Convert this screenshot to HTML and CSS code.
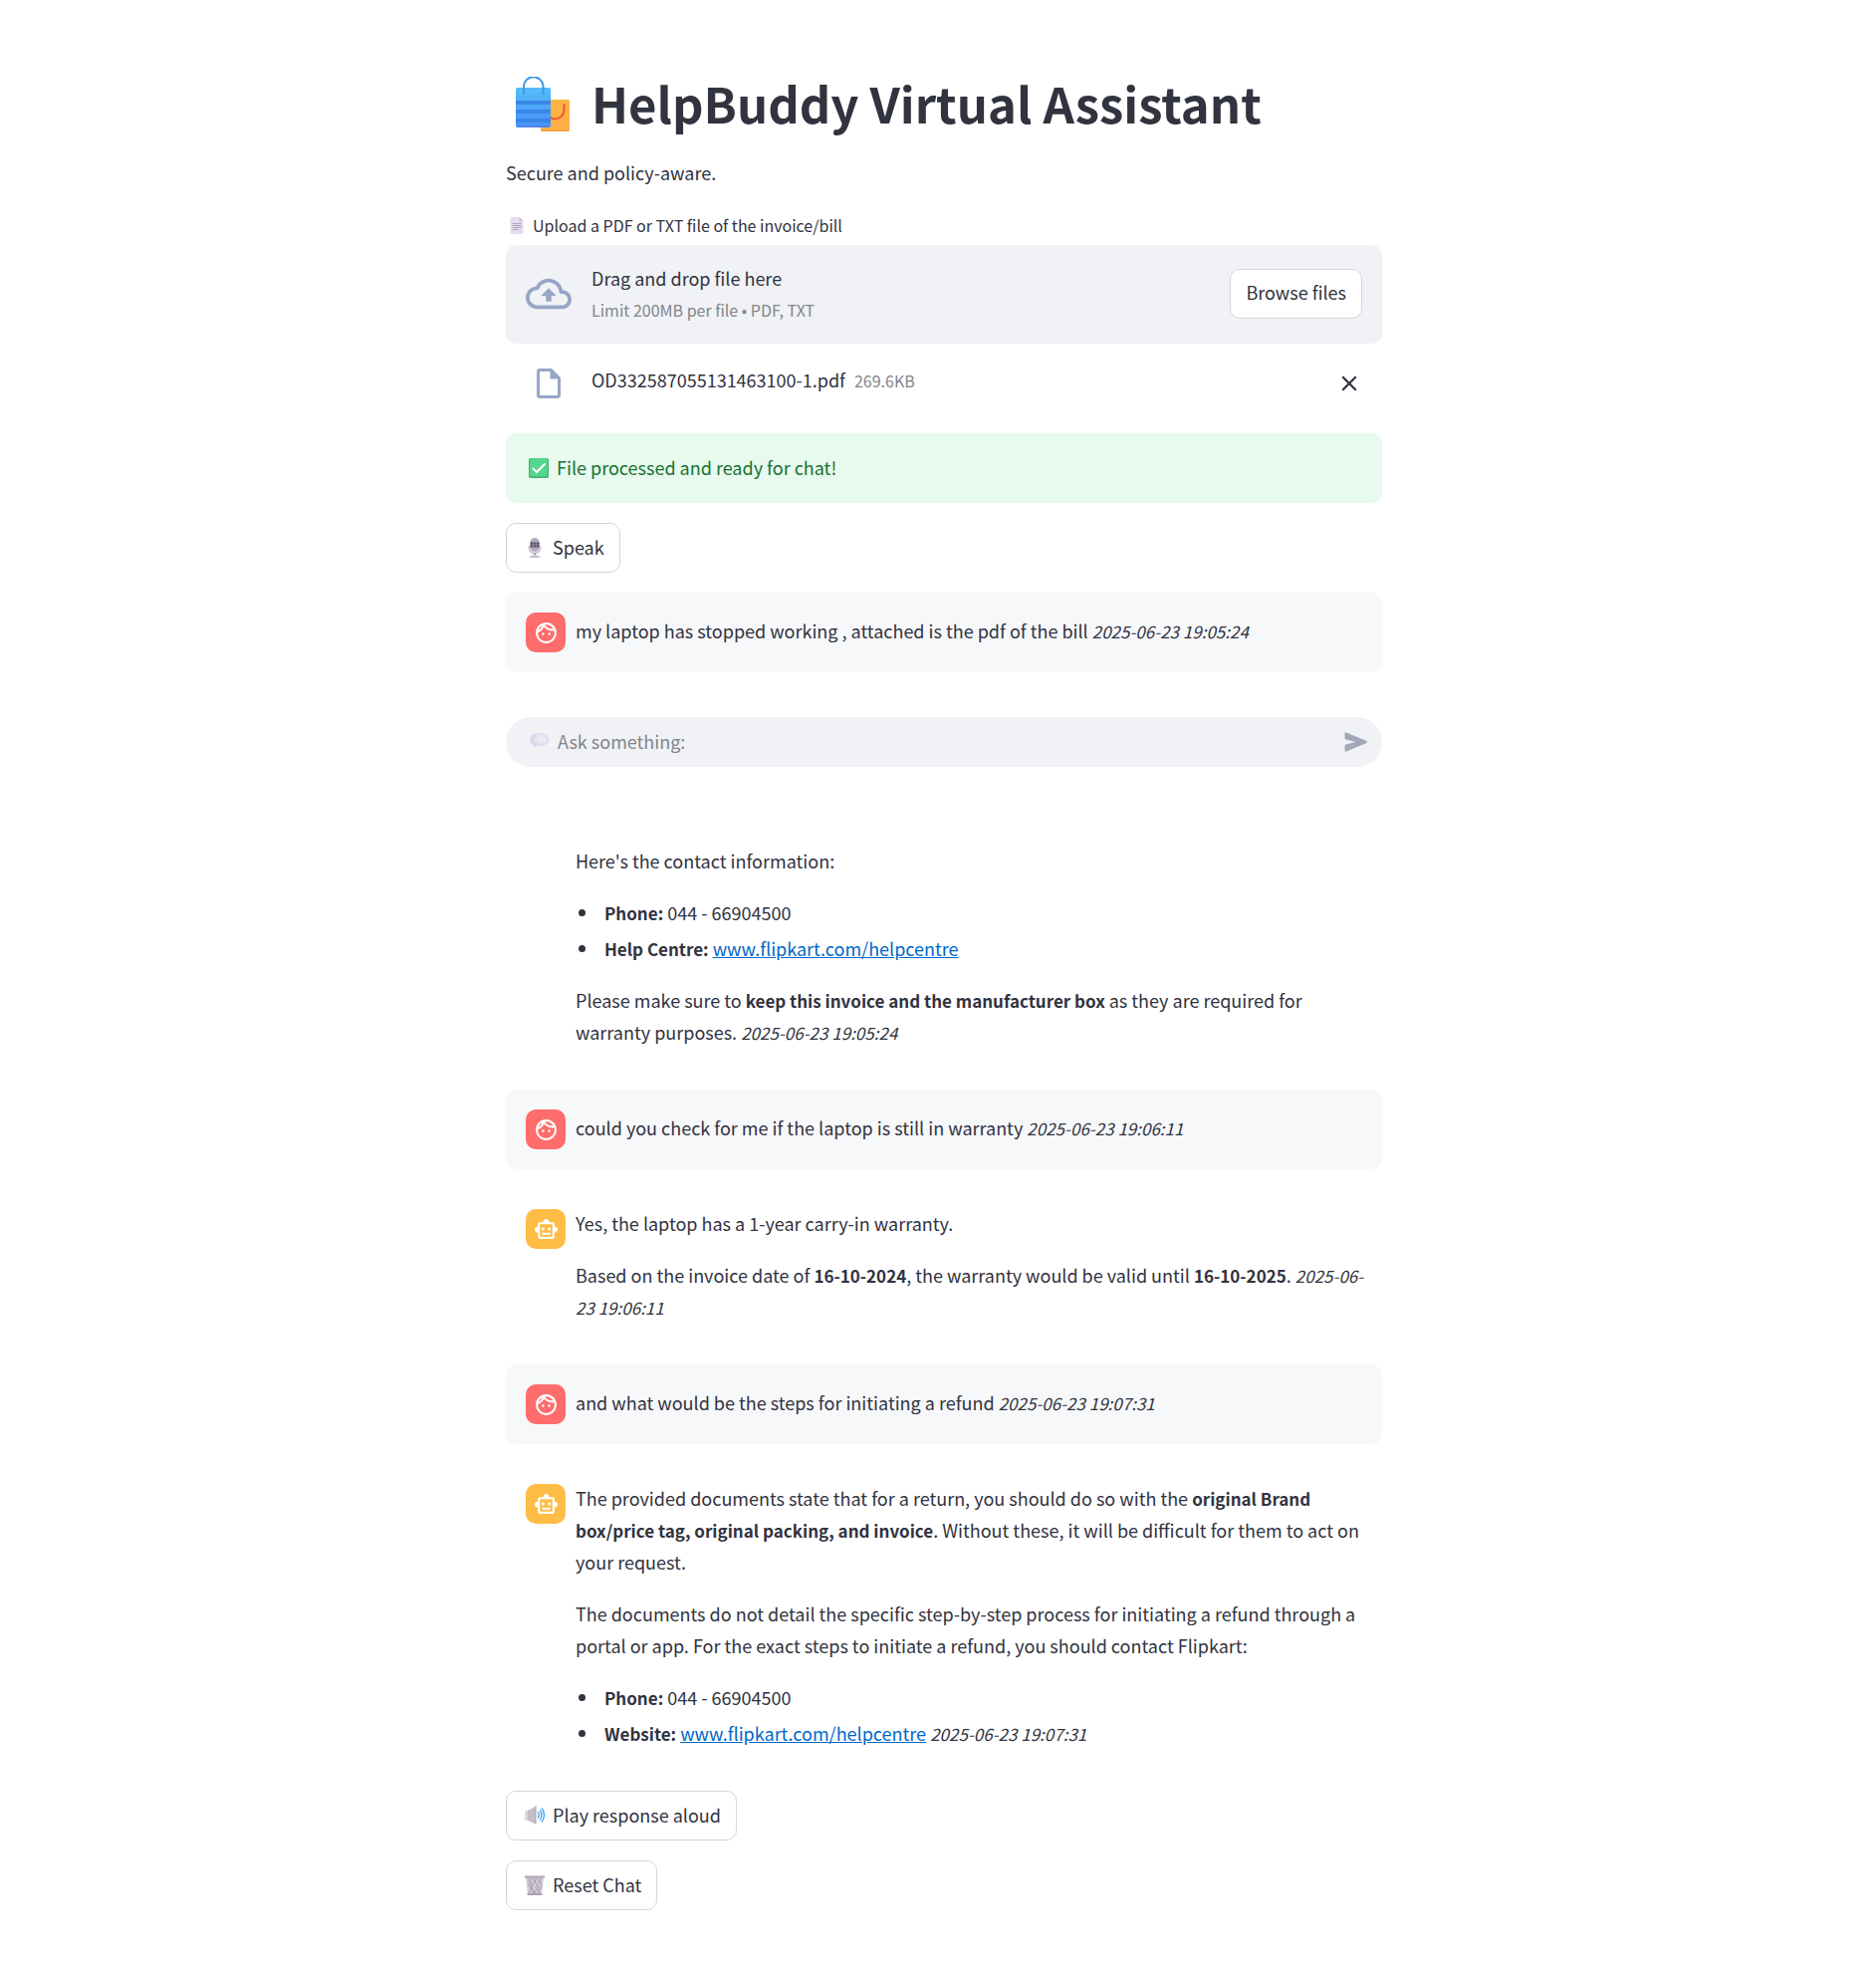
FILE: index.html
```html
<!DOCTYPE html>
<html lang="en">
<head>
<meta charset="utf-8">
<meta name="viewport" content="width=device-width, initial-scale=1">
<title>HelpBuddy Virtual Assistant</title>
<link rel="stylesheet" href="styles.css">
</head>
<body>
<svg class="sprite" aria-hidden="true">
  <symbol id="face" viewBox="0 0 24 24"><path d="M10.25 13c0 .69-.56 1.25-1.25 1.25S7.75 13.69 7.75 13s.56-1.25 1.25-1.25 1.25.56 1.25 1.25zM15 11.75c-.69 0-1.25.56-1.25 1.25s.56 1.25 1.25 1.25 1.25-.56 1.25-1.25-.56-1.25-1.25-1.25zm7 .25c0 5.52-4.48 10-10 10S2 17.52 2 12 6.48 2 12 2s10 4.48 10 10zM10.66 4.12C12.06 6.44 14.6 8 17.5 8c.46 0 .91-.05 1.34-.12C17.44 5.56 14.9 4 12 4c-.46 0-.91.05-1.34.12zM4.42 9.47c1.71-.97 3.03-2.55 3.66-4.44C6.37 6 5.05 7.58 4.42 9.47zM20 12c0-.78-.12-1.53-.33-2.24-.7.15-1.42.24-2.17.24-3.13 0-5.92-1.44-7.76-3.69C8.69 8.87 6.6 10.88 4 11.86c.01.04 0 .09 0 .14 0 4.41 3.59 8 8 8s8-3.59 8-8z"/></symbol>
  <symbol id="robot" viewBox="0 0 24 24"><path d="M20 9V7c0-1.1-.9-2-2-2h-3c0-1.66-1.34-3-3-3S9 3.34 9 5H6c-1.1 0-2 .9-2 2v2c-1.66 0-3 1.34-3 3s1.34 3 3 3v4c0 1.1.9 2 2 2h12c1.1 0 2-.9 2-2v-4c1.66 0 3-1.34 3-3s-1.34-3-3-3zm-2 10H6V7h12v12zm-9-6c-.83 0-1.5-.67-1.5-1.5S8.17 10 9 10s1.5.67 1.5 1.5S9.83 13 9 13zm7.5-1.5c0 .83-.67 1.5-1.5 1.5s-1.5-.67-1.5-1.5.67-1.5 1.5-1.5 1.5.67 1.5 1.5zM8 15h8v2H8v-2z"/></symbol>
</svg>
<main class="page">
  <header class="intro">
    <h1 class="title">
      <svg class="bags" viewBox="0 0 54 55" aria-hidden="true">
        <defs>
          <linearGradient id="blue" x1="0" y1="0" x2="0" y2="1"><stop offset="0" stop-color="#55bdf8"/><stop offset="1" stop-color="#4791fb"/></linearGradient>
          <linearGradient id="gold" x1="0" y1="0" x2="1" y2="1"><stop offset="0" stop-color="#fdb840"/><stop offset="1" stop-color="#ffac49"/></linearGradient>
        </defs>
        <rect x="25" y="23" width="29" height="32" rx="1.5" fill="url(#gold)"/>
        <path d="M26 54h27" stroke="#f59a3e" stroke-width="1.5"/>
        <path d="M48.500 27v5c0 11-11 12.500-14.500 8" fill="none" stroke="#e75a37" stroke-width="2"/>
        <rect x="0" y="11" width="35" height="40" rx="2" fill="url(#blue)"/>
        <path d="M0 26h35M0 35h35M0 44h35" stroke="#3a86e8" stroke-width="4"/>
        <path d="M1 50h33" stroke="#5180e8" stroke-width="1.500"/>
        <path d="M8 18V10a9.500 9.500 0 0 1 19.500 0v8" fill="none" stroke="#3d9ae8" stroke-width="2"/>
      </svg>
      <span>HelpBuddy Virtual Assistant</span>
    </h1>
    <p>Secure and policy-aware.</p>
  </header>

  <section class="uploader">
    <label class="upload-label" for="browse">
      <svg class="doc" viewBox="0 0 13 17" aria-hidden="true"><path d="M0 0h9l4 4v13H0z" fill="#e6dcf0"/><path d="M9 0v4h4z" fill="#c9bdd6"/><path d="M2 6.500h9M2 8.500h9M2 10.500h9M2 12.500h6" stroke="#aaa0b5" stroke-width=".9"/></svg>
      <span>Upload a PDF or TXT file of the invoice/bill</span>
    </label>
    <div class="dropzone">
      <svg class="cloud" viewBox="0 0 24 24" aria-hidden="true"><path d="M19.350 10.040C18.670 6.590 15.640 4 12 4 9.110 4 6.600 5.640 5.350 8.040 2.340 8.360 0 10.910 0 14c0 3.310 2.690 6 6 6h13c2.760 0 5-2.240 5-5 0-2.640-2.050-4.780-4.650-4.960zM19 18H6c-2.210 0-4-1.790-4-4 0-2.050 1.530-3.760 3.560-3.970l1.070-.11.5-.95C8.080 7.140 9.940 6 12 6c2.620 0 4.880 1.860 5.390 4.430l.3 1.500 1.530.11c1.560.1 2.780 1.410 2.780 2.960 0 1.650-1.350 3-3 3zM8 13h2.550v3h2.900v-3H16l-4-4z"/></svg>
      <div class="drop-text">
        <span>Drag and drop file here</span>
        <small>Limit 200MB per file • PDF, TXT</small>
      </div>
      <button class="button" id="browse" type="button"><span>Browse files</span></button>
    </div>
    <div class="file">
      <svg class="file-icon" viewBox="0 0 24 24" aria-hidden="true"><path d="M14 2H6c-1.100 0-1.990.9-1.990 2L4 20c0 1.100.89 2 1.990 2H18c1.100 0 2-.9 2-2V8l-6-6zM6 20V4h7v5h5v11H6z"/></svg>
      <div class="file-name">
        <span>OD332587055131463100-1.pdf</span>
        <small>269.6KB</small>
      </div>
      <button class="remove" type="button" aria-label="Remove file">
        <svg viewBox="0 0 16 16" aria-hidden="true"><path d="M2 2l12 12M14 2L2 14"/></svg>
      </button>
    </div>
  </section>

  <div class="alert" role="status">
    <svg class="emoji" viewBox="0 0 20 20" aria-hidden="true"><rect width="20" height="20" rx="2" fill="#3cae75"/><rect x="1" width="18" height="18.500" rx="1.500" fill="#55d58d"/><path d="M4.500 10.500l3.500 3.500 8-8" fill="none" stroke="#fff" stroke-width="2" stroke-linecap="round"/></svg>
    <span>File processed and ready for chat!</span>
  </div>

  <button class="button with-icon" type="button">
    <svg class="emoji" viewBox="0 0 20 20" aria-hidden="true"><path d="M4.500 8v2a5.500 5.500 0 0 0 11 0V8" fill="none" stroke="#c3bccb" stroke-width="1.500"/><rect x="5.500" y="0" width="9" height="14" rx="4.500" fill="#b5adbd"/><path d="M5.500 4.500h9v5h-9z" fill="#594b65"/><path d="M5.500 7h9M8.500 3v8M11.500 3v8" stroke="#a99fb3" stroke-width=".7"/><path d="M10 15v3" stroke="#a69eb0" stroke-width="2"/><path d="M4 20q1-2.500 4-2.500h4q3 0 4 2.500z" fill="#cbc1d5"/></svg>
    <span>Speak</span>
  </button>

  <article class="message user">
    <div class="avatar"><svg aria-hidden="true"><use href="#face"/></svg></div>
    <div class="content"><p>my laptop has stopped working , attached is the pdf of the bill <em>2025-06-23 19:05:24</em></p></div>
  </article>

  <form class="composer">
    <div class="composer-box">
      <svg class="emoji" viewBox="0 0 20 20" aria-hidden="true"><defs><radialGradient id="bubble" cx=".6" cy=".4"><stop offset="0" stop-color="#f4f0fa"/><stop offset="1" stop-color="#dcd5ea"/></radialGradient></defs><path d="M10 1c5.500 0 9.500 2.800 9.500 6.500S15.500 14 10 14q-1.500 0-2.500-.2L4 16l-.2-3.300C1.500 11.500.5 9.500.5 7.500.5 3.800 4.500 1 10 1z" fill="url(#bubble)"/></svg>
      <input type="text" placeholder="Ask something:" aria-label="Ask something">
      <button class="send" type="submit" aria-label="Send">
        <svg viewBox="0 0 23 20" aria-hidden="true"><path d="M0 1.500Q0 0 1.500.4L22 9q1.300 1 0 2L1.500 19.600Q0 20 0 18.500V14q0-1 1-1.400L11 10 1 7.400Q0 7 0 6z"/></svg>
      </button>
    </div>
  </form>

  <article class="message continued">
    <div class="content">
      <p>Here's the contact information:</p>
      <ul>
        <li><strong>Phone:</strong> 044 - 66904500</li>
        <li><strong>Help Centre:</strong> <a href="#helpcentre">www.flipkart.com/helpcentre</a></li>
      </ul>
      <p>Please make sure to <strong>keep this invoice and the manufacturer box</strong> as they are required for warranty purposes. <em>2025-06-23 19:05:24</em></p>
    </div>
  </article>

  <article class="message user">
    <div class="avatar"><svg aria-hidden="true"><use href="#face"/></svg></div>
    <div class="content"><p>could you check for me if the laptop is still in warranty <em>2025-06-23 19:06:11</em></p></div>
  </article>

  <article class="message">
    <div class="avatar"><svg aria-hidden="true"><use href="#robot"/></svg></div>
    <div class="content">
      <p>Yes, the laptop has a 1-year carry-in warranty.</p>
      <p>Based on the invoice date of <strong>16-10-2024</strong>, the warranty would be valid until <strong>16-10-2025</strong>. <em>2025-06-<wbr>23 19:06:11</em></p>
    </div>
  </article>

  <article class="message user">
    <div class="avatar"><svg aria-hidden="true"><use href="#face"/></svg></div>
    <div class="content"><p>and what would be the steps for initiating a refund <em>2025-06-23 19:07:31</em></p></div>
  </article>

  <article class="message">
    <div class="avatar"><svg aria-hidden="true"><use href="#robot"/></svg></div>
    <div class="content">
      <p>The provided documents state that for a return, you should do so with the <strong>original Brand box/price tag, original packing, and invoice</strong>. Without these, it will be difficult for them to act on your request.</p>
      <p>The documents do not detail the specific step-by-step process for initiating a refund through a portal or app. For the exact steps to initiate a refund, you should contact Flipkart:</p>
      <ul>
        <li><strong>Phone:</strong> 044 - 66904500</li>
        <li><strong>Website:</strong> <a href="#website">www.flipkart.com/helpcentre</a> <em>2025-06-23 19:07:31</em></li>
      </ul>
    </div>
  </article>

  <button class="button with-icon" type="button">
    <svg class="emoji" viewBox="0 0 20 20" aria-hidden="true"><path d="M0 6l3-1 8-4.500v18L3 15l-3-1z" fill="#c3bdc9"/><path d="M0 6l3-1v10l-3-1z" fill="#ddd6e2"/><path d="M11 .5v18" stroke="#a9a2b0" stroke-width="1"/><path d="M13 6.500q2.500 3 0 6M15 4.500q4 5 0 10M17 2.500q5 7 0 14" fill="none" stroke="#4ba6f5" stroke-width="1.300"/></svg>
    <span>Play response aloud</span>
  </button>
  <button class="button with-icon" type="button">
    <svg class="emoji" viewBox="0 0 20 20" aria-hidden="true"><path d="M1 2h18l-2 17H3z" fill="#d2cbda"/><path d="M3 3l5 8-4 7M8 3l6 9-5 6M13 3l4 7-4 8M7 3l-3 7 5 8M12 3L6 12l5 6M17 3l-6 9 5 6" fill="none" stroke="#a69dad" stroke-width=".9"/><path d="M0 1.500h20M2.500 19h15" stroke="#aca3b5" stroke-width="2"/></svg>
    <span>Reset Chat</span>
  </button>
</main>
</body>
</html>
```
FILE: styles.css
```css
* {
  box-sizing: border-box;
}

body {
  margin: 0;
  background: #fff;
  color: #31333f;
  font-family: "Noto Sans CJK JP", "Noto Sans CJK SC", "Open Sans", sans-serif;
  font-size: 18px;
  line-height: 32px;
}

svg {
  display: block;
  flex: none;
  fill: currentColor;
}

p,
h1,
ul {
  margin: 0;
}

button,
input {
  font: inherit;
  color: inherit;
}

button {
  cursor: pointer;
}

small {
  font-size: 16px;
  color: #83858c;
}

/* A short line height keeps the smaller text from stretching its line. */
em,
strong {
  font-size: 17px;
  line-height: 16px;
}

a {
  color: #0068c9;
}

.sprite {
  position: absolute;
  width: 0;
  height: 0;
}

.page {
  display: flex;
  flex-direction: column;
  align-items: flex-start;
  gap: 20px;
  max-width: 892px;
  margin: 0 auto;
  padding: 70px 0 50px 12px;
}

.page > * {
  width: 100%;
}

/* The font sits low in its line box; this centres it beside the icons. */
.title span,
.button span,
.alert span,
.intro p,
.composer input {
  padding: 0 0 3px;
}

.intro {
  display: flex;
  flex-direction: column;
  gap: 18px;
}

.title {
  display: flex;
  align-items: center;
  gap: 22px;
  padding-left: 10px;
  font-size: 49px;
  line-height: 66px;
}

.bags {
  width: 54px;
  height: 55px;
}

.upload-label {
  display: flex;
  align-items: center;
  gap: 9px;
  margin-bottom: 6px;
  padding-left: 4px;
  font-size: 16px;
  line-height: 28px;
}

.doc {
  width: 14px;
  height: 17px;
}

.dropzone {
  display: flex;
  align-items: center;
  gap: 20px;
  min-height: 99px;
  padding: 15px 20px 17px;
  border-radius: 10px;
  background: #f0f2f6;
}

.cloud {
  width: 46px;
  height: 46px;
  color: #98a6c6;
}

.drop-text {
  display: flex;
  flex: 1;
  flex-direction: column;
}

.page .button {
  display: inline-flex;
  align-items: center;
  gap: 8px;
  width: auto;
  height: 50px;
  padding: 0 15px;
  border: 1px solid #d6d6d9;
  border-radius: 10px;
  background: #fff;
}

.page .with-icon {
  padding-left: 18px;
}

.file {
  display: flex;
  align-items: center;
  gap: 25px;
  height: 40px;
  margin: 20px 0 10px;
  padding: 0 20px 0 25px;
}

.file-icon {
  width: 36px;
  height: 36px;
  color: #98a6c6;
}

.file-name {
  display: flex;
  flex: 1;
  align-items: baseline;
  gap: 9px;
  padding-bottom: 7px;
}

.remove,
.send {
  display: flex;
  align-items: center;
  justify-content: center;
  padding: 0;
  border: 0;
  background: none;
}

.remove {
  width: 26px;
  height: 26px;
}

.remove svg {
  width: 18px;
  height: 18px;
  stroke: currentColor;
  stroke-width: 2;
}

.emoji {
  width: 20px;
  height: 20px;
}

.alert {
  display: flex;
  align-items: center;
  gap: 8px;
  min-height: 70px;
  padding: 16px 23px;
  border-radius: 10px;
  background: #e8f9ee;
  color: #177233;
}

.message {
  display: flex;
  align-items: flex-start;
  gap: 10px;
  padding: 20px 15px 20px 20px;
}

.message.user {
  align-items: center;
  border-radius: 10px;
  background: #f7f8fa;
}

.message.continued {
  padding-left: 70px;
}

.avatar {
  display: flex;
  flex: none;
  align-items: center;
  justify-content: center;
  width: 40px;
  height: 40px;
  border-radius: 10px;
  background: #ffbd45;
  color: #fff;
}

.user .avatar {
  background: #ff6c6c;
}

.avatar svg {
  width: 25px;
  height: 25px;
}

.content {
  display: flex;
  flex: 1;
  flex-direction: column;
  gap: 20px;
  margin: -2px 0 2px;
}

.content ul {
  display: flex;
  flex-direction: column;
  gap: 4px;
  padding-left: 24px;
}

.content li {
  padding-left: 5px;
}

.composer {
  padding: 25px 0 40px;
}

.composer-box {
  display: flex;
  align-items: center;
  gap: 8px;
  height: 50px;
  padding: 0 14px 0 24px;
  border-radius: 25px;
  background: #f0f2f6;
}

.composer input {
  flex: 1;
  min-width: 0;
  border: 0;
  outline: 0;
  background: none;
}

.composer input::placeholder {
  color: #83858c;
  opacity: 1;
}

.send {
  color: #a3a8b8;
}

.send svg {
  width: 24px;
  height: 20px;
}
```
